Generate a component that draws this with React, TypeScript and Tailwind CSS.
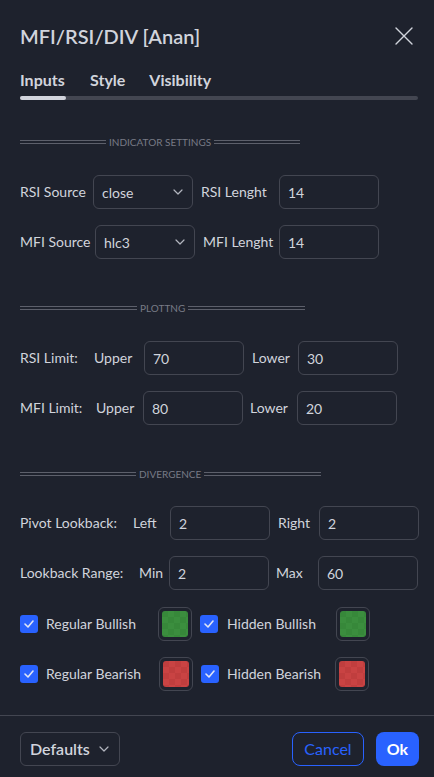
import React from 'react';

const FONT = { fontFamily: 'Lato, "Noto Sans", sans-serif' };

const Chevron: React.FC = () => (
  <svg width="10" height="6" viewBox="0 0 10 6" fill="none" className="text-[#b2b5be]">
    <path d="M1 1l4 4 4-4" stroke="currentColor" strokeWidth="1.2" strokeLinecap="round" strokeLinejoin="round" />
  </svg>
);

const Divider: React.FC<{ label: string; left: string; right: string }> = ({ label, left, right }) => (
  <div className="flex items-center h-3 gap-[3px]">
    <div className={`${left} h-[4px] border-y border-[#5d606b]`} />
    <span className="text-[10px] leading-3 uppercase text-[#787b86]">{label}</span>
    <div className={`${right} h-[4px] border-y border-[#5d606b]`} />
  </div>
);

const Field: React.FC<{ value: string; w?: string }> = ({ value, w = 'w-[100px]' }) => (
  <div className={`${w} h-[34px] shrink-0 rounded-[6px] border border-[#434651] flex items-center px-[8px] text-[14px]`}>
    {value}
  </div>
);

const Select: React.FC<{ value: string }> = ({ value }) => (
  <div className="w-[100px] h-[34px] shrink-0 rounded-[6px] border border-[#434651] flex items-center justify-between pl-[8px] pr-[9px] text-[14px]">
    <span>{value}</span>
    <Chevron />
  </div>
);

const Label: React.FC<{ text: string; w: string }> = ({ text, w }) => (
  <span className={`${w} shrink-0 text-[14px] leading-5 whitespace-nowrap`}>{text}</span>
);

const Check: React.FC = () => (
  <div className="w-[18px] h-[18px] shrink-0 rounded-[3px] bg-[#2962ff] flex items-center justify-center">
    <svg width="10" height="8" viewBox="0 0 10 8" fill="none">
      <path d="M1 4l3 3 5-6" stroke="#dfe4f5" strokeWidth="1.6" strokeLinecap="round" strokeLinejoin="round" />
    </svg>
  </div>
);

const Swatch: React.FC<{ green?: boolean }> = ({ green }) => (
  <div className="w-[34px] h-[34px] shrink-0 rounded-[6px] border border-[#434651] flex items-center justify-center">
    <div
      className={`w-[26px] h-[26px] rounded-[3px] bg-[length:12px_12px] ${
        green
          ? 'bg-[repeating-conic-gradient(#3b8e3e_0_25%,#37883a_0_50%)]'
          : 'bg-[repeating-conic-gradient(#c94343_0_25%,#c03e3e_0_50%)]'
      }`}
    />
  </div>
);

const App: React.FC = () => {
  return (
    <div style={FONT} className="w-[434px] h-[777px] bg-[#1e222d] text-[#d1d4dc] flex flex-col">
      <div className="flex items-center justify-between pl-5 pr-[20px] pt-[24px]">
        <h1 className="text-[20px] leading-[24px] font-semibold">MFI/RSI/DIV [Anan]</h1>
        <svg width="18" height="18" viewBox="0 0 18 18" fill="none" className="mr-[1px]">
          <path d="M1 1l16 16M17 1L1 17" stroke="#d1d4dc" strokeWidth="1.4" strokeLinecap="round" />
        </svg>
      </div>

      <div className="px-5 mt-[22px]">
        <div className="flex gap-6 text-[16px] leading-5 font-bold">
          <span className="w-[46px]">Inputs</span>
          <span>Style</span>
          <span>Visibility</span>
        </div>
        <div className="mt-[6px] h-[4px] w-[398px] rounded-full bg-[#434651] flex">
          <div className="w-[46px] h-full rounded-full bg-[#d1d4dc]" />
        </div>
      </div>

      <div className="px-5 flex-1">
        <div className="mt-[36px]">
          <Divider label="Indicator Settings" left="w-[86px]" right="w-[86px]" />
        </div>
        <div className="mt-[27px] flex flex-col gap-4">
          <div className="flex items-center">
            <Label text="RSI Source" w="w-[73px]" />
            <Select value="close" />
            <Label text="RSI Lenght" w="w-[78px] ml-2" />
            <Field value="14" />
          </div>
          <div className="flex items-center">
            <Label text="MFI Source" w="w-[75px]" />
            <Select value="hlc3" />
            <Label text="MFI Lenght" w="w-[76px] ml-2" />
            <Field value="14" />
          </div>
        </div>

        <div className="mt-[43px]">
          <Divider label="Plottng" left="w-[117px]" right="w-[117px]" />
        </div>
        <div className="mt-[27px] flex flex-col gap-4">
          <div className="flex items-center">
            <Label text="RSI Limit:" w="w-[74px]" />
            <Label text="Upper" w="w-[50px]" />
            <Field value="70" />
            <Label text="Lower" w="w-[46px] ml-2" />
            <Field value="30" />
          </div>
          <div className="flex items-center">
            <Label text="MFI Limit:" w="w-[76px]" />
            <Label text="Upper" w="w-[47px]" />
            <Field value="80" />
            <Label text="Lower" w="w-[47px] ml-[7px]" />
            <Field value="20" />
          </div>
        </div>

        <div className="mt-[43px]">
          <Divider label="Divergence" left="w-[116px]" right="w-[117px]" />
        </div>
        <div className="mt-[26px] flex flex-col gap-4">
          <div className="flex items-center">
            <Label text="Pivot Lookback:" w="w-[113px]" />
            <Label text="Left" w="w-[37px]" />
            <Field value="2" />
            <Label text="Right" w="w-[41px] ml-2" />
            <Field value="2" />
          </div>
          <div className="flex items-center">
            <Label text="Lookback Range:" w="w-[119px]" />
            <Label text="Min" w="w-[30px]" />
            <Field value="2" />
            <Label text="Max" w="w-[42px] ml-[7px]" />
            <Field value="60" />
          </div>
        </div>

        <div className="mt-[17px] flex flex-col gap-4">
          <div className="flex items-center">
            <Check />
            <Label text="Regular Bullish" w="w-[112px] ml-2" />
            <Swatch green />
            <div className="ml-2"><Check /></div>
            <Label text="Hidden Bullish" w="w-[109px] ml-[9px]" />
            <Swatch green />
          </div>
          <div className="flex items-center">
            <Check />
            <Label text="Regular Bearish" w="w-[113px] ml-2" />
            <Swatch />
            <div className="ml-2"><Check /></div>
            <Label text="Hidden Bearish" w="w-[108px] ml-2" />
            <Swatch />
          </div>
        </div>
      </div>

      <div className="border-t border-[#434651] h-[62px] pl-5 pr-[15px] flex items-start pt-[16px] justify-between">
        <div className="w-[100px] h-[34px] rounded-[6px] border border-[#434651] flex items-center justify-between pl-[9px] pr-[10px] text-[16px] font-semibold">
          <span>Defaults</span>
          <Chevron />
        </div>
        <div className="flex gap-3">
          <div className="w-[72px] h-[34px] rounded-[8px] border border-[#2962ff] text-[#2962ff] flex items-center justify-center text-[16px]">
            Cancel
          </div>
          <div className="w-[43px] h-[34px] rounded-[8px] bg-[#2962ff] text-white flex items-center justify-center text-[16px] font-bold">
            Ok
          </div>
        </div>
      </div>
    </div>
  );
};

export default App;
